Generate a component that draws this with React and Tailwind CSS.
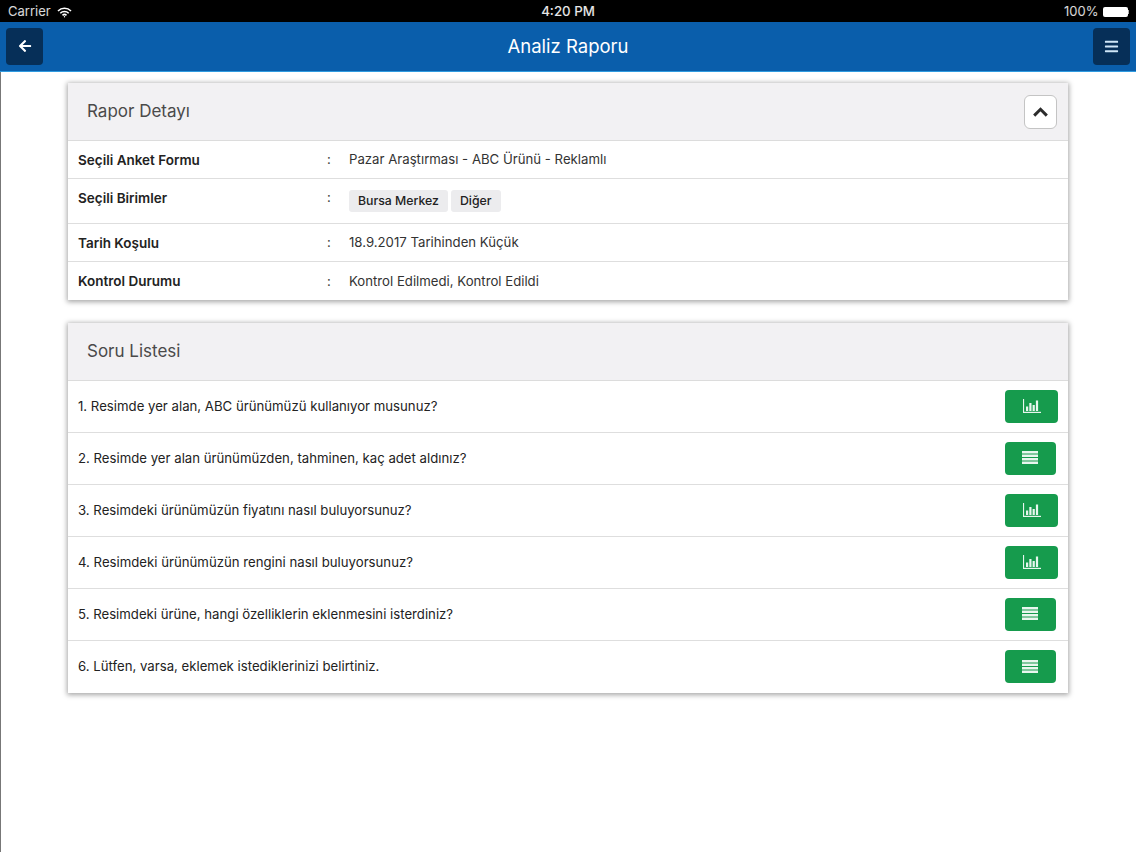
import { FaArrowLeft, FaBars } from "react-icons/fa";

const details = [
  { label: "Seçili Anket Formu", value: "Pazar Araştırması - ABC Ürünü - Reklamlı", h: "h-[38px]" },
  { label: "Seçili Birimler", tags: ["Bursa Merkez", "Diğer"], h: "h-[45px]" },
  { label: "Tarih Koşulu", value: "18.9.2017 Tarihinden Küçük", h: "h-[38px]" },
  { label: "Kontrol Durumu", value: "Kontrol Edilmedi, Kontrol Edildi", h: "h-[38px]" },
];

const questions = [
  { text: "1. Resimde yer alan, ABC ürünümüzü kullanıyor musunuz?", chart: true },
  { text: "2. Resimde yer alan ürünümüzden, tahminen, kaç adet aldınız?", chart: false },
  { text: "3. Resimdeki ürünümüzün fiyatını nasıl buluyorsunuz?", chart: true },
  { text: "4. Resimdeki ürünümüzün rengini nasıl buluyorsunuz?", chart: true },
  { text: "5. Resimdeki ürüne, hangi özelliklerin eklenmesini isterdiniz?", chart: false },
  { text: "6. Lütfen, varsa, eklemek istediklerinizi belirtiniz.", chart: false },
];

function Wifi() {
  return (
    <svg width="15" height="11" viewBox="0 0 15 11" fill="none" stroke="#fff" strokeWidth="1.6" strokeLinecap="butt">
      <path d="M1 4a9.2 9.2 0 0 1 13 0" />
      <path d="M3.3 6.2a6 6 0 0 1 8.4 0" />
      <path d="M5.5 8.3a2.9 2.9 0 0 1 4 0" />
      <circle cx="7.5" cy="9.8" r="0.7" fill="#fff" stroke="none" />
    </svg>
  );
}

function Battery() {
  return (
    <div className="flex items-center">
      <div className="w-[25px] h-[10px] bg-white border border-white/70 rounded-[2px]" />
      <div className="w-[1.5px] h-[4px] bg-white/70" />
    </div>
  );
}

function ChartIcon() {
  return (
    <svg width="18" height="14" viewBox="0 0 18 14" fill="#e8f6ee">
      <rect x="0" y="0" width="1.1" height="14" />
      <rect x="0" y="12.8" width="18" height="1.2" />
      <rect x="3" y="7.5" width="2.2" height="4.5" />
      <rect x="6.3" y="4" width="2.2" height="8" />
      <rect x="9.6" y="6" width="2.2" height="6" />
      <rect x="12.9" y="1.5" width="2.2" height="10.5" />
    </svg>
  );
}

function LinesIcon() {
  return (
    <svg width="16" height="13" viewBox="0 0 16 13" fill="#e8f6ee" className="mb-[1px] mr-[1px]">
      <rect x="0" y="0" width="16" height="2.5" />
      <rect x="0" y="3.5" width="16" height="2.5" />
      <rect x="0" y="7" width="16" height="2.5" />
      <rect x="0" y="10.5" width="16" height="2.5" />
    </svg>
  );
}

function ChevronUp() {
  return (
    <svg width="15" height="10" viewBox="0 0 15 10" fill="none" stroke="#2c2c2c" strokeWidth="3">
      <path d="M1.2 8.6 7.5 2.3l6.3 6.3" />
    </svg>
  );
}

function CardHeader({ title, titleClass, children }) {
  return (
    <div className="h-[58px] bg-[#f2f1f3] border-b border-[#dcdcdc] flex items-center justify-between pl-[19px] pr-[11px]">
      <span className={`text-[17px] text-[#4a4a4a] ${titleClass}`}>{title}</span>
      {children}
    </div>
  );
}

export default function App() {
  return (
    <div className="w-[1136px] h-[852px] bg-white flex flex-col overflow-hidden font-['Inter','Liberation_Sans',sans-serif] text-[#222]">
      <div className="h-[22px] bg-black text-white flex items-center justify-between pl-[8px] pr-[7px] pt-[2px] text-[13px] relative shrink-0">
        <div className="flex items-center gap-[6px] text-white/85">
          <span>Carrier</span>
          <Wifi />
        </div>
        <div className="absolute inset-x-0 text-center font-medium text-[13.3px] text-white/90">4:20 PM</div>
        <div className="flex items-center gap-[4px] text-white/85">
          <span>100%</span>
          <Battery />
        </div>
      </div>

      <div className="h-[50px] shrink-0 bg-[#0a5eab] border-b border-[#2f9be0] flex items-center justify-between px-[6px] pb-[1px]">
        <button className="w-[37px] h-[37px] bg-[#062f58] rounded-[4px] flex items-center justify-center text-white">
          <FaArrowLeft size={14} />
        </button>
        <span className="text-white text-[18.5px] font-normal pt-[1px]">Analiz Raporu</span>
        <button className="w-[37px] h-[37px] bg-[#062f58] rounded-[4px] flex items-center justify-center text-[#cfe6f7]">
          <FaBars size={15} />
        </button>
      </div>

      <div className="flex-1 border-l border-[#777] pl-[67px] pr-[68px] pt-[11px] flex flex-col gap-[23px]">
        <div className="shadow-[0_1px_5px_1px_rgba(0,0,0,0.35)] bg-white">
          <CardHeader title="Rapor Detayı" titleClass="pt-[1px]">
            <button className="w-[33px] h-[34px] bg-white border border-[#c4c4c4] rounded-[6px] flex items-center justify-center">
              <ChevronUp />
            </button>
          </CardHeader>
          {details.map((d, i) => (
            <div
              key={d.label}
              className={`${d.h} flex text-[13.2px] pl-[10px] ${i < details.length - 1 ? "border-b border-[#dedede]" : ""} ${d.tags ? "items-start pt-[9px]" : "items-center pt-[1px]"}`}
            >
              <span className="w-[249px] font-semibold text-[13.5px] text-[#222]">{d.label}</span>
              <span className="w-[22px] text-[#444]">:</span>
              {d.tags ? (
                <div className="flex gap-[3px] mt-[2px]">
                  {d.tags.map((t) => (
                    <span key={t} className="h-[22px] px-[9px] bg-[#ececee] rounded-[3px] flex items-center text-[12.3px] font-medium text-[#222]">
                      {t}
                    </span>
                  ))}
                </div>
              ) : (
                <span className="text-[#333]">{d.value}</span>
              )}
            </div>
          ))}
        </div>

        <div className="shadow-[0_1px_5px_1px_rgba(0,0,0,0.35)] bg-white">
          <CardHeader title="Soru Listesi" titleClass="" />
          {questions.map((q, i) => (
            <div
              key={q.text}
              className={`h-[52px] flex items-center justify-between pl-[10px] text-[13.2px] text-[#222] ${q.chart ? "pr-[10px]" : "pr-[12px]"} ${i < questions.length - 1 ? "border-b border-[#dedede]" : ""}`}
            >
              <span>{q.text}</span>
              <button className={`${q.chart ? "w-[53px]" : "w-[51px]"} h-[33px] mb-[1px] bg-[#169b4d] rounded-[4px] flex items-center justify-center`}>
                {q.chart ? <ChartIcon /> : <LinesIcon />}
              </button>
            </div>
          ))}
        </div>
      </div>
    </div>
  );
}
